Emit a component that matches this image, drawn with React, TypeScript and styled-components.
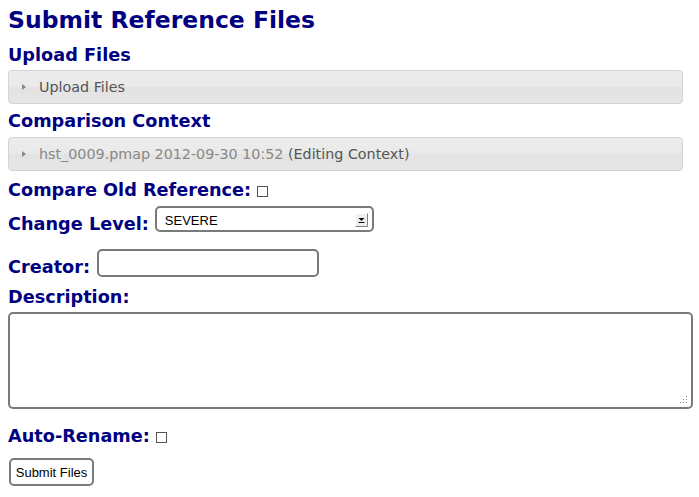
import React from "react";
import styled, { createGlobalStyle } from "styled-components";

const Global = createGlobalStyle`
  html, body { margin: 0; padding: 0; background: #fff; }
  body { font-family: "DejaVu Sans", sans-serif; }
`;

const Page = styled.div`
  padding: 5px 6px 0 8px;
  display: flex;
  flex-direction: column;
  align-items: stretch;
`;

const Title = styled.h1`
  margin: 0;
  font-family: "DejaVu Sans", sans-serif;
  font-weight: bold;
  font-size: 23.5px;
  line-height: 30px;
  color: #000080;
`;

const Heading = styled.h2<{ $mt: number }>`
  margin: ${(p) => p.$mt}px 0 0 0;
  font-family: "DejaVu Sans", sans-serif;
  font-weight: bold;
  font-size: 17.7px;
  line-height: 22px;
  color: #000080;
  display: flex;
  align-items: center;
  gap: 6px;
`;

const Accordion = styled.div<{ $mt: number }>`
  margin: ${(p) => p.$mt}px 10px 0 0;
  height: 32px;
  border: 1px solid #d3d3d3;
  border-radius: 4px;
  background: linear-gradient(#ededed 0%, #e9e9e9 50%, #e3e3e3 50%, #e6e6e6 100%);
  display: flex;
  align-items: center;
  padding-left: 13px;
  font-family: "DejaVu Sans", sans-serif;
  font-size: 14.3px;
  color: #555;
`;

const Caret = styled.span`
  width: 0;
  height: 0;
  border-top: 3.5px solid transparent;
  border-bottom: 3.5px solid transparent;
  border-left: 4px solid #888;
  margin-right: 13px;
`;

const Dim = styled.span`
  color: #888;
`;

const Check = styled.input.attrs({ type: "checkbox" })`
  appearance: none;
  -webkit-appearance: none;
  margin: 3px 0 0 0;
  width: 11px;
  height: 11px;
  border: 1px solid #555;
  background: #fff;
  box-sizing: border-box;
`;

const FieldRow = styled.div<{ $mt: number; $gap: number }>`
  margin-top: ${(p) => p.$mt}px;
  display: flex;
  align-items: flex-end;
  gap: ${(p) => p.$gap}px;
`;

const Label = styled.label<{ $drop?: number }>`
  font-family: "DejaVu Sans", sans-serif;
  font-weight: bold;
  font-size: 17.7px;
  line-height: 22px;
  color: #000080;
  margin-bottom: ${(p) => -(p.$drop ?? 0)}px;
`;

const SelectWrap = styled.div`
  position: relative;
  width: 219px;
  height: 26px;
  flex: none;
`;

const Select = styled.select`
  appearance: none;
  -webkit-appearance: none;
  width: 100%;
  height: 26px;
  box-sizing: border-box;
  border: 2px solid #7a7a7a;
  border-radius: 5px;
  background: #fff;
  padding: 2px 0 0 8px;
  margin: 0;
  font-family: "Liberation Sans", Arial, sans-serif;
  font-size: 13px;
  color: #000;
  outline: none;
  display: block;
`;

const ArrowBox = styled.span`
  position: absolute;
  right: 6px;
  top: 6px;
  width: 13px;
  height: 14px;
  pointer-events: none;
  display: block;
`;

const TextInput = styled.input`
  width: 222px;
  height: 28px;
  box-sizing: border-box;
  border: 2px solid #7a7a7a;
  border-radius: 5px;
  background: #fff;
  outline: none;
  margin: 0;
  flex: none;
`;

const AreaWrap = styled.div`
  position: relative;
  margin-top: 4px;
  height: 97px;
`;

const Area = styled.textarea`
  width: 100%;
  height: 100%;
  box-sizing: border-box;
  border: 2px solid #7a7a7a;
  border-radius: 5px;
  resize: none;
  outline: none;
  margin: 0;
  display: block;
`;

const Grip = styled.svg`
  position: absolute;
  right: 5px;
  bottom: 5px;
  pointer-events: none;
`;

const Button = styled.button`
  margin: 11px 0 0 1px;
  align-self: flex-start;
  width: 85px;
  height: 28px;
  box-sizing: border-box;
  border: 2px solid #7a7a7a;
  border-radius: 5px;
  background: #fff;
  padding: 0;
  font-family: "Liberation Sans", Arial, sans-serif;
  font-size: 13px;
  color: #000;
`;

export default function App() {
  return (
    <>
      <Global />
      <Page>
        <Title>Submit Reference Files</Title>
        <Heading $mt={9}>Upload Files</Heading>
        <Accordion $mt={4}>
          <Caret />
          Upload Files
        </Accordion>
        <Heading $mt={6}>Comparison Context</Heading>
        <Accordion $mt={5}>
          <Caret />
          <Dim>hst_0009.pmap 2012-09-30 10:52</Dim>&nbsp;(Editing Context)
        </Accordion>
        <Heading $mt={8}>
          Compare Old Reference: <Check />
        </Heading>
        <FieldRow $mt={5} $gap={6}>
          <Label $drop={3}>Change Level:</Label>
          <SelectWrap>
            <Select defaultValue="SEVERE">
              <option>SEVERE</option>
              <option>MODERATE</option>
              <option>TRIVIAL</option>
            </Select>
            <ArrowBox>
              <svg width="13" height="14" viewBox="0 0 13 14">
                <rect x="0.5" y="0.5" width="12" height="13" fill="#f0f0f0" stroke="#fff" />
                <path d="M12.5 0.5 V13.5 H0.5" fill="none" stroke="#808080" />
                <path d="M3.5 5 H9.5 L6.5 8 Z" fill="#000" />
                <rect x="3.5" y="9" width="6" height="1" fill="#000" />
              </svg>
            </ArrowBox>
          </SelectWrap>
        </FieldRow>
        <FieldRow $mt={17} $gap={7}>
          <Label $drop={1}>Creator:</Label>
          <TextInput type="text" />
        </FieldRow>
        <Heading $mt={9}>Description:</Heading>
        <AreaWrap>
          <Area />
          <Grip width="8" height="8" viewBox="0 0 8 8">
            <rect x="6" y="0" width="1" height="1" fill="#888" />
            <rect x="6" y="3" width="1" height="1" fill="#888" />
            <rect x="3" y="3" width="1" height="1" fill="#888" />
            <rect x="6" y="6" width="1" height="1" fill="#888" />
            <rect x="3" y="6" width="1" height="1" fill="#888" />
            <rect x="0" y="6" width="1" height="1" fill="#888" />
          </Grip>
        </AreaWrap>
        <Heading $mt={16}>
          Auto-Rename: <Check />
        </Heading>
        <Button>Submit Files</Button>
      </Page>
    </>
  );
}
